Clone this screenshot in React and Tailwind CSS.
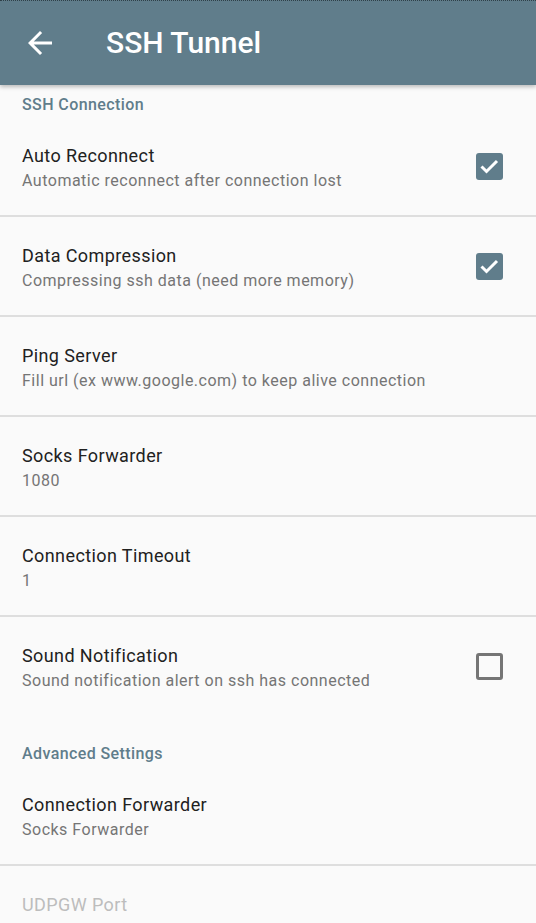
import React from 'react'

// ================================================================
// SETTINGS DATA
// ================================================================
const connectionItems = [
  { title: 'Auto Reconnect', summary: 'Automatic reconnect after connection lost', check: true },
  { title: 'Data Compression', summary: 'Compressing ssh data (need more memory)', check: true },
  { title: 'Ping Server', summary: 'Fill url (ex www.google.com) to keep alive connection' },
  { title: 'Socks Forwarder', summary: '1080' },
  { title: 'Connection Timeout', summary: '1' },
  { title: 'Sound Notification', summary: 'Sound notification alert on ssh has connected', check: false, last: true },
]

const BackArrow = () => (
  <svg className="w-9 h-9" viewBox="0 0 24 24" fill="#ffffff">
    <path d="M20 11H7.83l5.59-5.59L12 4l-8 8 8 8 1.41-1.41L7.83 13H20v-2z" />
  </svg>
)

const Checkbox = ({ checked }) =>
  checked ? (
    <div className="w-[27px] h-[27px] rounded-[3px] bg-[#607d8b]">
      <svg className="w-[27px] h-[27px]" viewBox="0 0 27 27" fill="none">
        <polyline points="5.5,13.5 10.5,18.5 21,8" stroke="#ffffff" strokeWidth="3" />
      </svg>
    </div>
  ) : (
    <div className="w-[27px] h-[27px] rounded-[3px] border-[3px] border-[#757575]" />
  )

const SectionHeader = ({ children, className }) => (
  <div className={className}>
    <p className="px-[22px] text-[16px] leading-5 font-medium tracking-[0.4px] text-[#607d8b]">{children}</p>
  </div>
)

const PrefItem = ({ title, summary, check, disabled }) => (
  <div className="h-[98px] flex items-start pt-[27px] pl-[22px] pr-[33px]">
    <div className="flex-1 min-w-0">
      <p className={`text-[18px] leading-6 tracking-[0.4px] ${disabled ? 'text-[#bdbdbd]' : 'text-[#212121]'}`}>{title}</p>
      <p className={`mt-[2px] text-[16px] leading-[22px] tracking-[0.5px] ${disabled ? 'text-[#bdbdbd]' : 'text-[#757575]'}`}>{summary}</p>
    </div>
    {check !== undefined && (
      <div className="pt-[9px]">
        <Checkbox checked={check} />
      </div>
    )}
  </div>
)

const Divider = () => <div className="h-[2px] bg-[#dedede]" />

// ================================================================
// MAIN APP COMPONENT
// ================================================================
function App() {
  return (
    <div className="w-[536px] h-[923px] overflow-hidden bg-[#fafafa] font-['Roboto',sans-serif] relative">
      {/* Toolbar */}
      <div className="relative z-10 h-[85px] bg-[#607d8b] border-t border-dotted border-[#2f4048] flex items-center shadow-[0_2px_4px_rgba(0,0,0,0.25)]">
        <div className="ml-[22px] w-9 h-9 flex items-center">
          <BackArrow />
        </div>
        <h1 className="ml-[48px] text-[30px] font-medium text-white leading-8">SSH Tunnel</h1>
      </div>

      <SectionHeader className="h-[32px] pt-[10px]">SSH Connection</SectionHeader>

      {connectionItems.map((item) => (
        <div key={item.title}>
          <PrefItem {...item} />
          {!item.last && <Divider />}
        </div>
      ))}

      <SectionHeader className="h-[51px] pt-[29px]">Advanced Settings</SectionHeader>

      <PrefItem title="Connection Forwarder" summary="Socks Forwarder" />
      <Divider />
      <PrefItem title="UDPGW Port" summary="7300" disabled />
    </div>
  )
}

export default App
